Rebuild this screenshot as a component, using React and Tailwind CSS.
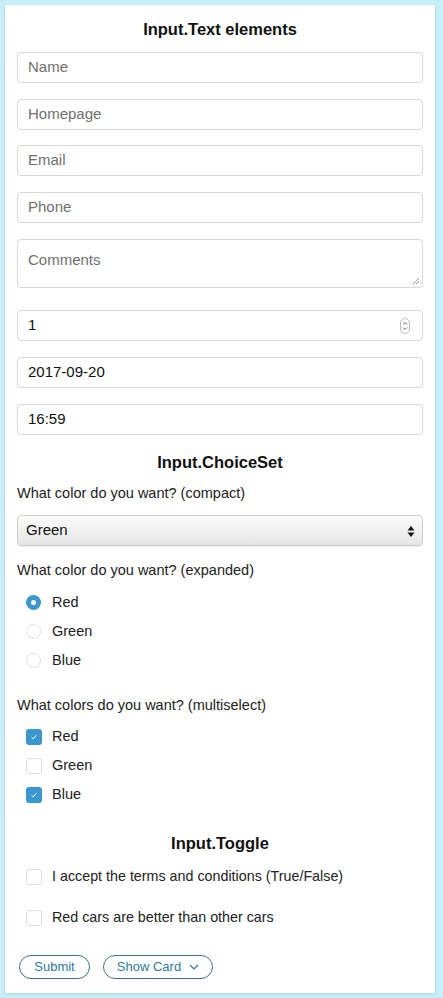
import React from "react";

const F = { fontFamily: '"Liberation Sans", Arial, Helvetica, sans-serif' };

function TextBox({ placeholder, value, mt, h = "h-[31px]", children }) {
  return (
    <div
      className={`relative ${mt} ${h} w-full rounded-[4px] border border-[#d9d9d9] bg-white flex ${
        children ? "" : "items-center"
      } px-[10px] text-[15px]`}
    >
      {value ? (
        <span className="text-[#111]">{value}</span>
      ) : (
        <span className="text-[#707070]">{placeholder}</span>
      )}
      {children}
    </div>
  );
}

function Radio({ checked, label }) {
  return (
    <div className="flex h-[29px] items-center pl-[9px]">
      {checked ? (
        <div className="flex h-[15px] w-[15px] items-center justify-center rounded-full bg-[#3c96cf]">
          <div className="h-[5px] w-[5px] rounded-full bg-white" />
        </div>
      ) : (
        <div className="h-[15px] w-[15px] rounded-full border border-[#dedede] bg-white" />
      )}
      <span className="ml-[11px] text-[14.5px] text-[#222]">{label}</span>
    </div>
  );
}

function Check({ checked, label, size = "text-[14.5px]" }) {
  return (
    <div className="flex h-[29px] items-center pl-[9px]">
      {checked ? (
        <div className="flex h-[16px] w-[16px] items-center justify-center rounded-[3px] bg-[#3c96cf]">
          <svg width="8" height="8" viewBox="0 0 8 8">
            <path d="M1.5 4.2 L3.2 5.8 L6.5 2.2" fill="none" stroke="white" strokeWidth="1" />
          </svg>
        </div>
      ) : (
        <div className="h-[16px] w-[16px] rounded-[3px] border border-[#dedede] bg-white" />
      )}
      <span className={`ml-[10px] ${size} text-[#222]`}>{label}</span>
    </div>
  );
}

export default function App() {
  return (
    <div style={F} className="min-h-[998px] w-[443px] bg-[#c6eff9] pl-[5px] pt-[5px]">
      <div className="flex w-[430px] flex-col rounded-[2px] bg-white px-[12px] pt-[14px] pb-[14px] shadow-[0_1px_3px_rgba(0,0,0,0.12)]">
        <div className="h-[20px] text-center text-[16.5px] font-bold leading-[20px] text-[#111]">
          Input.Text elements
        </div>
        <TextBox placeholder="Name" mt="mt-[13px]" />
        <TextBox placeholder="Homepage" mt="mt-[16px]" />
        <TextBox placeholder="Email" mt="mt-[15px]" />
        <TextBox placeholder="Phone" mt="mt-[16px]" />
        <div className="relative mt-[16px] h-[49px] w-full rounded-[4px] border border-[#d9d9d9] bg-white px-[10px] pt-[11px] text-[15px] leading-[18px] text-[#707070]">
          Comments
          <svg className="absolute bottom-[2px] right-[2px]" width="8" height="8" viewBox="0 0 8 8">
            <path d="M7 1 L1 7 M7 4 L4 7" stroke="#8a8a8a" strokeWidth="0.9" />
          </svg>
        </div>
        <div className="relative mt-[22px] flex h-[31px] w-full items-center rounded-[4px] border border-[#d9d9d9] bg-white px-[10px] text-[15px] text-[#111]">
          1
          <div className="absolute right-[12px] top-[7px] flex h-[16px] w-[10px] flex-col items-center justify-center rounded-[5px] border border-[#bbb]">
            <svg width="6" height="12" viewBox="0 0 6 12">
              <path d="M1 4.5 L3 2.5 L5 4.5 M1 7.5 L3 9.5 L5 7.5" fill="none" stroke="#555" strokeWidth="0.9" />
            </svg>
          </div>
        </div>
        <TextBox value="2017-09-20" mt="mt-[16px]" />
        <TextBox value="16:59" mt="mt-[16px]" />

        <div className="mt-[17px] h-[20px] text-center text-[16.5px] font-bold leading-[20px] text-[#111]">
          Input.ChoiceSet
        </div>
        <div className="mt-[11px] h-[20px] text-[14.5px] leading-[20px] text-[#222]">
          What color do you want? (compact)
        </div>
        <div className="relative mt-[12px] flex h-[31px] w-full items-center rounded-[4px] border border-[#d0d0d0] bg-gradient-to-b from-[#fbfbfb] to-[#e6e6e6] pl-[8px] text-[15px] text-[#111] shadow-[0_1px_1px_rgba(0,0,0,0.08)]">
          Green
          <svg className="absolute right-[7px] top-[9px]" width="8" height="13" viewBox="0 0 8 13">
            <path d="M4 1 L7.5 5.5 L0.5 5.5 Z M4 12 L7.5 7.5 L0.5 7.5 Z" fill="#111" />
          </svg>
        </div>
        <div className="mt-[14px] h-[20px] text-[14.5px] leading-[20px] text-[#222]">
          What color do you want? (expanded)
        </div>
        <div className="mt-[8px] flex flex-col">
          <Radio checked label="Red" />
          <Radio label="Green" />
          <Radio label="Blue" />
        </div>
        <div className="mt-[20px] h-[20px] text-[14.5px] leading-[20px] text-[#222]">
          What colors do you want? (multiselect)
        </div>
        <div className="mt-[7px] flex flex-col">
          <Check checked label="Red" />
          <Check label="Green" />
          <Check checked label="Blue" />
        </div>

        <div className="mt-[24px] h-[20px] text-center text-[16.5px] font-bold leading-[20px] text-[#111]">
          Input.Toggle
        </div>
        <div className="mt-[9px]">
          <Check size="text-[14.3px]" label="I accept the terms and conditions (True/False)" />
        </div>
        <div className="mt-[12px]">
          <Check size="text-[14.3px]" label="Red cars are better than other cars" />
        </div>

        <div className="mt-[23px] flex gap-[13px] pl-[2px]">
          <button className="flex h-[24px] w-[71px] items-center justify-center rounded-full border border-[#3f6f86] bg-white text-[13px] text-[#2f7aa3]">
            Submit
          </button>
          <button className="flex h-[24px] w-[110px] items-center justify-center gap-[8px] rounded-full border border-[#3f6f86] bg-white text-[13px] text-[#2f7aa3]">
            Show Card
            <svg width="10" height="6" viewBox="0 0 10 6">
              <path d="M1 1 L5 5 L9 1" fill="none" stroke="#2f7aa3" strokeWidth="1.2" />
            </svg>
          </button>
        </div>
      </div>
    </div>
  );
}
